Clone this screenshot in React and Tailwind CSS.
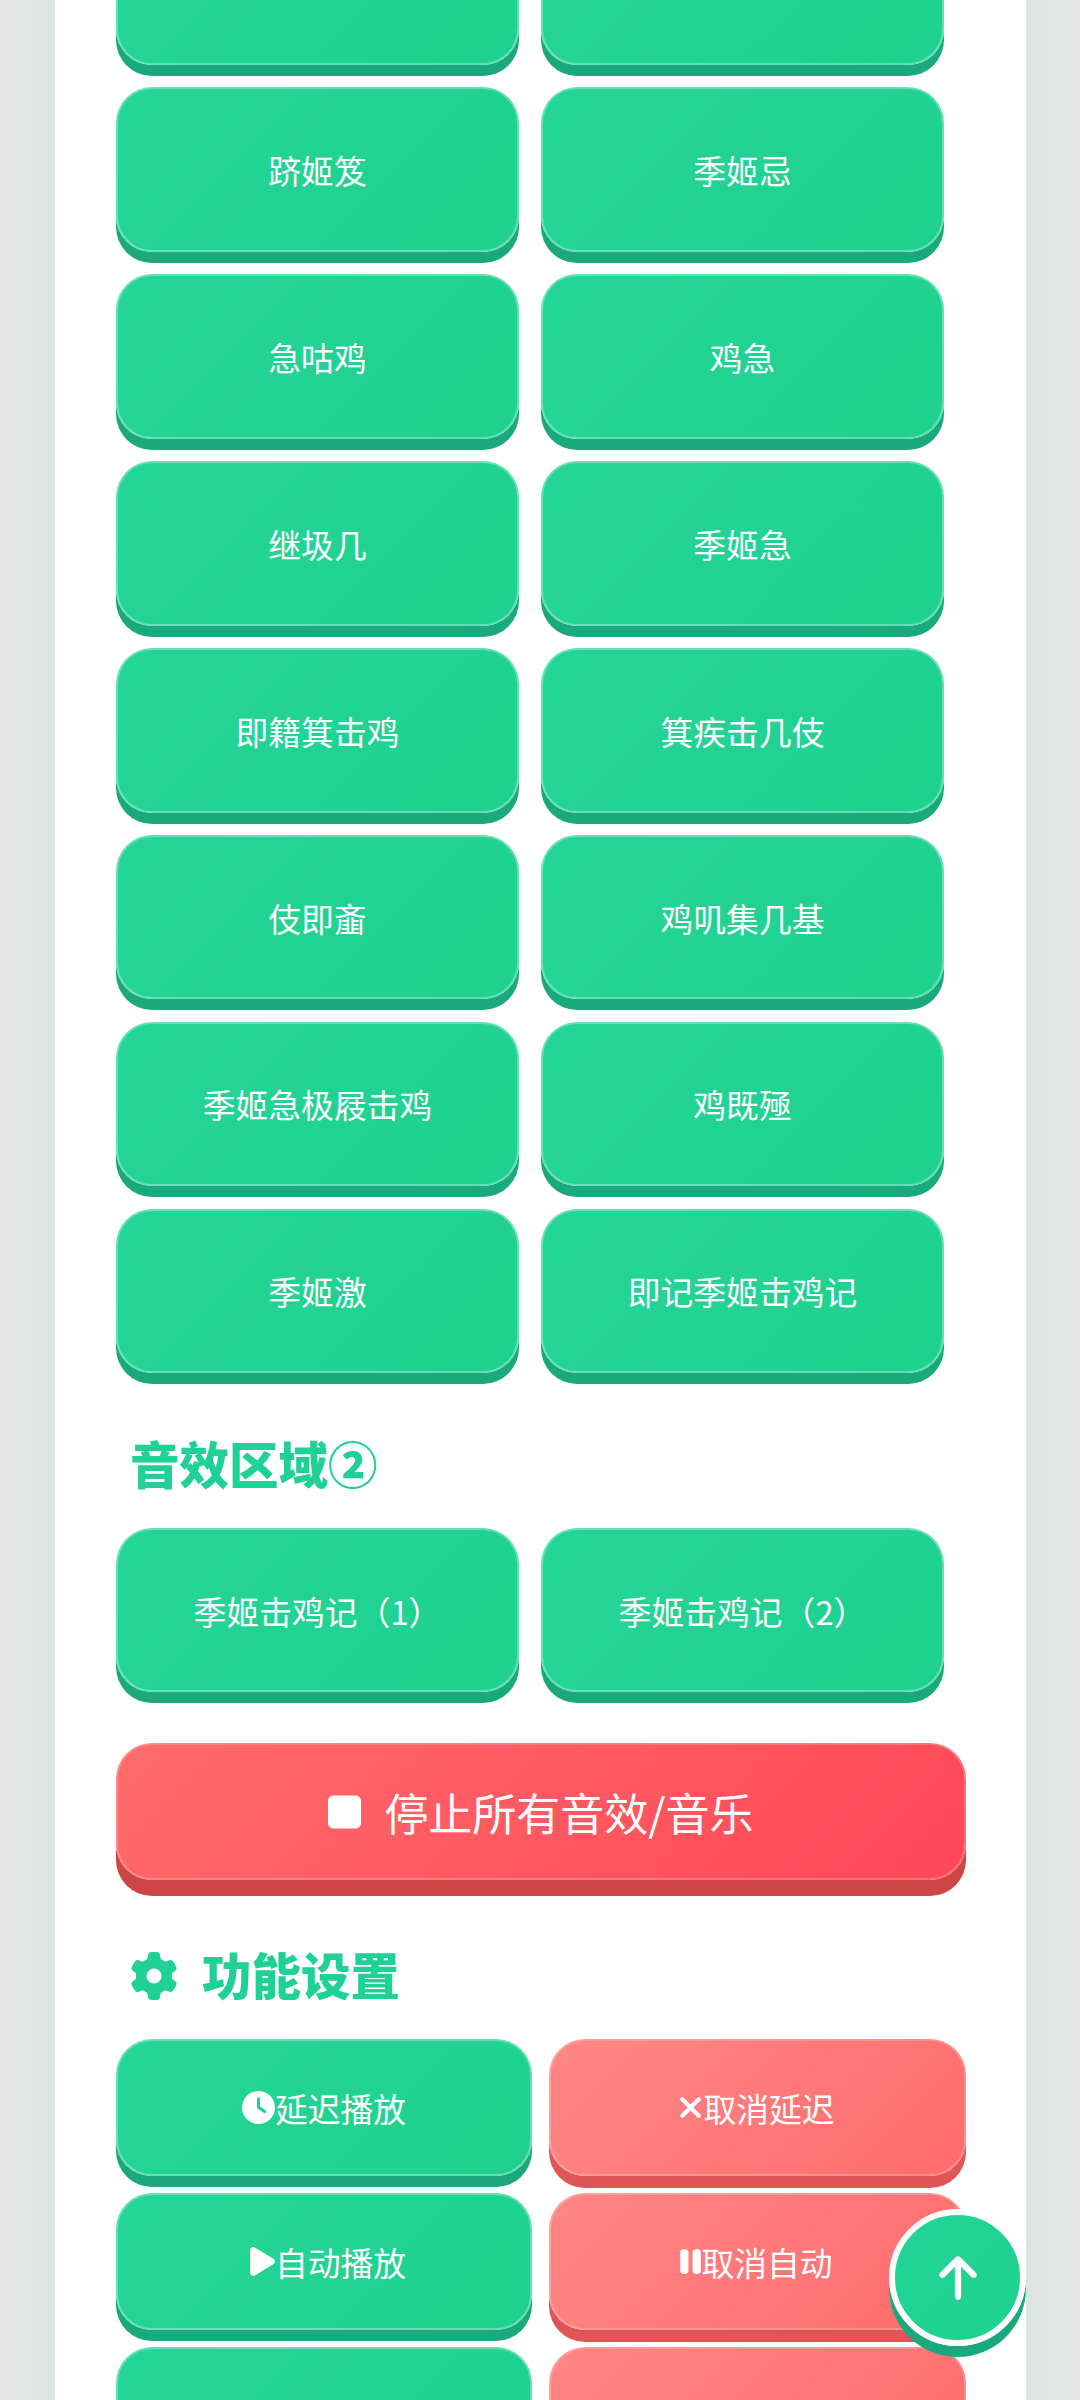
import React from 'react';
import { FaArrowUp, FaClock, FaGear, FaPause, FaPlay, FaStop, FaXmark } from 'react-icons/fa6';

const soundRows = [
  ['', ''],
  ['跻姬笈', '季姬忌'],
  ['急咕鸡', '鸡急'],
  ['继圾几', '季姬急'],
  ['即籍箕击鸡', '箕疾击几伎'],
  ['伎即齑', '鸡叽集几基'],
  ['季姬急极屐击鸡', '鸡既殛'],
  ['季姬激', '即记季姬击鸡记'],
];

const SoundButton = ({ label }) => (
  <button className="flex h-[164.67px] items-center justify-center rounded-[36px] border-2 border-white/30 bg-[linear-gradient(135deg,#24d598,#1fd18e)] bg-origin-border text-[32.8px] text-white shadow-[0_11px_0_#1aa97d]">
    {label}
  </button>
);

const SettingButton = ({ icon, label, danger }) => (
  <button
    className={
      danger
        ? 'flex h-[136.67px] items-center justify-center rounded-[36px] border-2 border-white/20 bg-[linear-gradient(135deg,#ff8787,#ff6b6b)] bg-origin-border pr-[2px] text-[32.8px] text-white shadow-[0_12px_0_#e05555]'
        : 'flex h-[136.67px] items-center justify-center rounded-[36px] border-2 border-white/30 bg-[linear-gradient(135deg,#24d598,#1fd18e)] bg-origin-border text-[32.8px] text-white shadow-[0_11px_0_#1aa97d]'
    }
  >
    {icon}
    <span>{label}</span>
  </button>
);

export default function App() {
  return (
    <div className="h-screen overflow-hidden bg-[#e8e8e8] font-['Noto_Sans_CJK_SC','Noto_Sans',sans-serif]">
      <div className="ml-[55px] mr-[54px] mt-[-99.4px] bg-white pb-[60px] pl-[61px] pr-[60px] shadow-[0_0_60px_rgba(32,209,150,0.15)]">
        <div className="grid grid-cols-[403px_403px] gap-x-[22px] gap-y-[22.2px]">
          {soundRows.flat().map((label, i) => (
            <SoundButton key={i} label={label} />
          ))}
        </div>

        <h2 className="mb-[28.5px] ml-[14px] mt-[54.1px] text-[49.5px] font-black leading-[72px] text-[#20d196]">音效区域②</h2>
        <div className="grid grid-cols-[403px_403px] gap-[22px]">
          <SoundButton label="季姬击鸡记（1）" />
          <SoundButton label="季姬击鸡记（2）" />
        </div>

        <button className="mt-[51px] flex h-[136.67px] w-full items-center justify-center rounded-[36px] border-2 border-white/20 bg-[linear-gradient(135deg,#ff6b6b,#ff4757)] bg-origin-border text-[44px] text-white shadow-[0_16px_0_#cf4444]">
          <FaStop className="mr-[23px] h-[44px] w-[33px]" />
          <span>停止所有音效/音乐</span>
        </button>

        <h2 className="mb-[28.83px] ml-[14px] mt-[58.17px] flex items-center text-[49.5px] font-black leading-[72px] text-[#20d196]">
          <FaGear className="mr-[24px] mt-[3px] h-[48px] w-[48px]" />
          功能设置
        </h2>
        <div className="grid grid-cols-[416px_417px] gap-x-[17px] gap-y-[17.33px]">
          <SettingButton icon={<FaClock className="h-[33px] w-[33px]" />} label="延迟播放" />
          <SettingButton danger icon={<FaXmark className="h-[33px] w-[25px]" />} label="取消延迟" />
          <SettingButton icon={<FaPlay className="ml-[8px] h-[33px] w-[25px]" />} label="自动播放" />
          <SettingButton danger icon={<FaPause className="h-[33px] w-[21px]" />} label="取消自动" />
          <SettingButton label="" />
          <SettingButton danger label="" />
        </div>
      </div>

      <button className="fixed bottom-[54px] right-[54px] flex h-[137px] w-[137px] items-center justify-center rounded-full border-[6px] border-white bg-[linear-gradient(135deg,#22d498,#1fd18e)] text-white shadow-[0_11px_0_#1aa97d]">
        <FaArrowUp className="h-[50px] w-[44px]" />
      </button>
    </div>
  );
}
